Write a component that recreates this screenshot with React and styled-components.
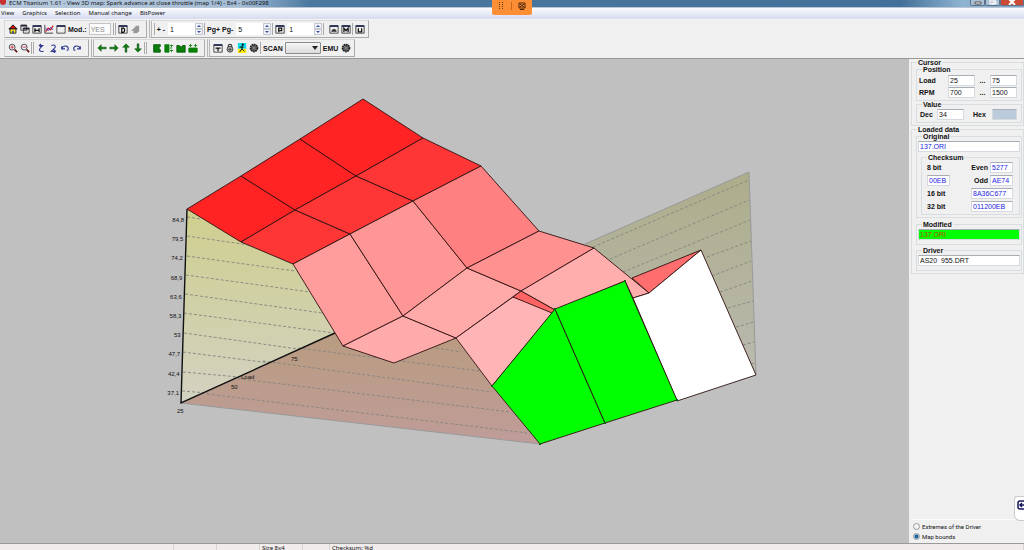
import React from "react";
import styled, { createGlobalStyle } from "styled-components";

const wallLines = [
  [187, 217, 201, 219],
  [187, 236, 249, 245],
  [187, 256, 295, 271],
  [186, 275, 310, 292],
  [185, 294, 322, 313],
  [184, 313, 334, 333],
  [184, 333, 298, 349],
  [183, 352, 270, 363],
  [183, 372, 239, 377],
  [182, 391, 208, 393],
  [298, 348, 480, 371],
  [436, 348, 461, 352],
  [263, 361, 492, 392],
  [233, 378, 510, 412],
  [207, 394, 527, 433],
  [593, 247, 749, 180],
  [610, 259, 749, 200],
  [623, 272, 750, 220],
  [707, 257, 751, 241],
  [712, 276, 751, 261],
  [720, 292, 752, 281],
  [728, 308, 753, 301],
  [736, 327, 754, 322],
  [743, 345, 754, 342],
  [751, 364, 755, 363],
];

const cells = [
  ["#ff2323", "187,209 241,176 295,210 241,242"],
  ["#ff2323", "241,176 300,139 356,176 295,210"],
  ["#ff2323", "300,139 363,99 423,138 356,176"],
  ["#ff3636", "241,242 295,210 350,234 293,264"],
  ["#ff3636", "295,210 356,176 413,201 350,234"],
  ["#ff3636", "356,176 423,138 481,166 413,201"],
  ["#ff9c9c", "293,264 350,234 403,316 343,346"],
  ["#ff9696", "350,234 413,201 467,268 403,316"],
  ["#ff8080", "413,201 481,166 539,231 467,268"],
  ["#ffabab", "343,346 403,316 456,338 394,363"],
  ["#ffa9a9", "403,316 467,268 521,291 456,338"],
  ["#ff9191", "467,268 539,231 594,248 521,291"],
  ["#ff6e6e", "632,278 701,250 649,293"],
  ["#ffadad", "521,291 594,248 649,293 633,298 625,281 555,310"],
  ["#ffb5b5", "456,338 513,297 555,310 492,386"],
  ["#ff6464", "513,297 521,291 555,310 552,313"],
  ["#ffffff", "633,298 649,293 701,250 756,375 677,401"],
  ["#00ff00", "492,386 555,309 605,423 540,444"],
  ["#00ff00", "555,309 625,281 677,400 605,423"],
];

const levels = [
  ["84,8", 220],
  ["79,5", 239],
  ["74,2", 258],
  ["68,9", 278],
  ["63,6", 297],
  ["58,3", 316],
  ["53", 335],
  ["47,7", 354],
  ["42,4", 374],
  ["37,1", 393],
];

const greenNodes = [
  [492, 386],
  [555, 309],
  [625, 281],
  [677, 400],
  [605, 423],
  [540, 444],
];

function Surface() {
  return (
    <Plot viewBox="0 59 909 484" preserveAspectRatio="xMidYMid meet" role="img" aria-label="Spark advance map">
      <defs>
        <linearGradient id="wall" x1="0" y1="0" x2="0" y2="1">
          <stop offset="0" stopColor="#cfcf8e" />
          <stop offset="1" stopColor="#d2d2c2" />
        </linearGradient>
        <linearGradient id="back" x1="0" y1="0" x2="0" y2="1">
          <stop offset="0" stopColor="#adad8a" />
          <stop offset="1" stopColor="#b9b9b0" />
        </linearGradient>
        <linearGradient id="floor" x1="0" y1="0" x2="0" y2="1">
          <stop offset="0" stopColor="#b99c80" />
          <stop offset="1" stopColor="#bf9c99" />
        </linearGradient>
      </defs>
      <polygon points="187,209 241,242 293,264 335,333 181,403" fill="url(#wall)" />
      <polygon points="181,403 335,333 343,346 394,363 456,338 492,386 540,444" fill="url(#floor)" />
      <polygon points="585,244 749,172 756,375 701,300 632,290" fill="url(#back)" />
      <path d="M181 403 540 444M585 244 749 172 756 375" fill="none" stroke="#999" />
      {wallLines.map(([x1, y1, x2, y2]) => (
        <line
          key={`${x1}-${y1}`}
          x1={x1}
          y1={y1}
          x2={x2}
          y2={y2}
          stroke="#858580"
          strokeWidth="0.9"
          strokeDasharray="3 2"
        />
      ))}
      <path d="M187 209 181 403 335 333" fill="none" stroke="#111" strokeWidth="1.4" />
      <g fontFamily="Liberation Sans, sans-serif" fontSize="6" fill="#111">
        {levels.map(([text, y]) => (
          <text key={text} x={184 - (y - 220) / 35} y={y + 2} textAnchor="end">
            {text}
          </text>
        ))}
        <text x="177" y="413">25</text>
        <text x="231" y="389">50</text>
        <text x="291" y="361">75</text>
        <text x="241" y="379">Load</text>
      </g>
      {cells.map(([fill, points]) => (
        <polygon key={points} points={points} fill={fill} stroke="#301010" strokeWidth="0.9" strokeLinejoin="round" />
      ))}
      {greenNodes.map(([x, y]) => (
        <rect key={x} x={x - 1} y={y - 1} width="2" height="2" fill="#086008" />
      ))}
    </Plot>
  );
}

const art = {
  home: (
    <>
      <path d="M1 6 6 1l5 5z" fill="#c41212" stroke="#111" />
      <path d="M2.500 6h7v5h-7z" fill="#ffee20" stroke="#111" />
      <path d="M5 8h2v3H5z" fill="#28409c" />
    </>
  ),
  copy: (
    <>
      <path d="M1 1.500h7v6H1zM4 5h7v6H4z" fill="#ddd" stroke="#333" />
      <path d="M1 2h7M4 5.500h7" stroke="#223" strokeWidth="2" />
    </>
  ),
  chart: (
    <>
      <path d="M1 1v10h10" fill="none" stroke="#223" />
      <path d="m2 9 3-4 3 2 3-5" fill="none" stroke="#e02020" strokeWidth="1.500" />
      <path d="m2 5 3 3 3-4 3 3" fill="none" stroke="#2424c0" />
    </>
  ),
  frame: (
    <>
      <path d="M1 2h10v9H1z" fill="#eee" stroke="#333" />
      <path d="M1 2.500h10" stroke="#222a50" strokeWidth="2" />
    </>
  ),
  hand: <path d="m1 8 5-4 1-2h4v7L8 11H4V8z" fill="#999" />,
  zoomIn: (
    <>
      <circle cx="5" cy="5" r="3.500" fill="#eef" stroke="#333" />
      <path d="m8 8 3 3" stroke="#611" strokeWidth="2" />
      <path d="M3 5h4M5 3v4" stroke="#d02020" />
    </>
  ),
  zoomOut: (
    <>
      <circle cx="5" cy="5" r="3.500" fill="#eef" stroke="#333" />
      <path d="m8 8 3 3" stroke="#611" strokeWidth="2" />
      <path d="M3 5h4" stroke="#d02020" />
    </>
  ),
  turnLeft: <path d="M4 3h4L5 6c-2 3 0 5 4 4M6 1 4 3l2 2" fill="none" stroke="#2c3890" strokeWidth="1.300" />,
  turnRight: <path d="M4 3c5-2 6 2 3 4l-3 3h5M7 8l2 2-2 2" fill="none" stroke="#2c3890" strokeWidth="1.300" />,
  undo: <path d="M2 4v3h4M2 7c2-5 8-4 8 0 0 2-1 2-2 2" fill="none" stroke="#2c3890" strokeWidth="1.300" />,
  redo: <path d="M10 4v3H6M10 7C8 2 2 3 2 7c0 2 1 2 2 2" fill="none" stroke="#2c3890" strokeWidth="1.300" />,
  left: <path d="m1 6 4-4v3h6v2H5v3z" fill="#0a800a" stroke="#053c05" strokeWidth="0.600" />,
  right: <path d="M11 6 7 2v3H1v2h6v3z" fill="#0a800a" stroke="#053c05" strokeWidth="0.600" />,
  up: <path d="m6 1 4 4H7v6H5V5H2z" fill="#0a800a" stroke="#053c05" strokeWidth="0.600" />,
  down: <path d="M6 11 2 7h3V1h2v6h3z" fill="#0a800a" stroke="#053c05" strokeWidth="0.600" />,
  fillLeft: <path d="M2 2h8v2L8 6l2 2v3H2z" fill="#0a800a" stroke="#075007" />,
  fillRight: <path d="M1 2h5v9H1zM7 3h4M7 6h3M7 9h4M9 2v3M9 8v3" fill="#0a800a" stroke="#0a800a" />,
  fillUp: <path d="M1 3h3l2 2 2-2h3v8H1z" fill="#0a800a" stroke="#075007" />,
  fillDown: <path d="M1 6h10v5H1zM3 1v4M9 1v4M1 3h4M7 3h4" fill="#0a800a" stroke="#0a800a" />,
  lock: (
    <>
      <path d="M4 5V3c0-2 4-2 4 0v2" fill="none" stroke="#444" strokeWidth="1.500" />
      <circle cx="6" cy="7.500" r="3.500" fill="#aaa" stroke="#333" />
      <path d="M6 6v3M4 8h4" stroke="#333" />
    </>
  ),
  runner: (
    <>
      <path d="M1 0h10v7H1z" fill="#10dcf0" />
      <path d="M1 7h10v5H1z" fill="#ffee10" />
      <circle cx="7" cy="2" r="1.300" fill="#111" />
      <path d="M3 5h5M6 3v4l3 3M6 7l-3 4" fill="none" stroke="#111" strokeWidth="1.200" />
    </>
  ),
  gear: (
    <>
      <circle cx="6" cy="6" r="4" fill="#888" stroke="#222" strokeWidth="2.500" strokeDasharray="2 0.600" />
      <circle cx="6" cy="6" r="1.500" fill="#eee" stroke="#222" />
    </>
  ),
};

const marks = {
  windowH: "M3.500 5v5M8.500 5v5M3.500 7.500h5",
  windowD: "M4.500 5v5h2c2-1 2-4 0-5z",
  windowP: "M4.500 10V5H8v3H5",
  windowE: "M3 8.500h2V7h2v1.500h2",
  windowM: "M3.500 10V5l2.500 3 2.500-3v5",
  windowU: "M4 5v4.500h4V5",
  windowT: "M3 6h6M6 6v4",
};

function Tool({ icon, label }) {
  return (
    <ToolButton type="button" aria-label={label}>
      <svg width="10" height="10" viewBox="0 0 12 12">
        {art[icon] || (
          <>
            <path d="M1 2h10v9H1z" fill="#eee" stroke="#333" />
            <path d="M1 2.500h10" stroke="#222a50" strokeWidth="2" />
            <path d={marks[icon]} fill="none" stroke="#111" strokeWidth="1.500" />
          </>
        )}
      </svg>
    </ToolButton>
  );
}

function Spin({ label, value }) {
  return (
    <SpinBox>
      <input aria-label={label} defaultValue={value} />
      <svg width="8" height="12" viewBox="0 0 8 12">
        <path d="M.5.500h7v5h-7zM.5 6.500h7v5h-7z" fill="#f1f3f8" stroke="#c3c7d2" />
        <path d="m2 4 2-2 2 2zM2 8l2 2 2-2z" fill="#3a50a0" />
      </svg>
    </SpinBox>
  );
}

function Field({ id, label, value, width, tone, fill }) {
  return (
    <>
      <label htmlFor={id}>{label}</label>
      <Box id={id} defaultValue={value} $width={width} $tone={tone} $fill={fill} />
    </>
  );
}

export default function App() {
  return (
    <Page>
      <GlobalStyle />
      <TitleBar>
        <AppIcon />
        <Title>ECM Titanium 1.61 - View 3D map: Spark advance at close throttle (map 1/4) - 8x4 - 0x00F298</Title>
        <WindowButtons>
          <WindowButton type="button" aria-label="Minimize">
            <svg width="8" height="5" viewBox="0 0 8 5"><path d="M1 2h6v2H1z" fill="#fff" stroke="#555" /></svg>
          </WindowButton>
          <WindowButton type="button" aria-label="Maximize">
            <svg width="8" height="5" viewBox="0 0 8 5"><path d="M1 0h4v4H1zM5 1h2v3H3" fill="#ccd" stroke="#fff" /></svg>
          </WindowButton>
          <WindowButton type="button" aria-label="Close" $close>
            <svg width="8" height="5" viewBox="0 0 8 5"><path d="m1-1 6 6M7-1 1 5" stroke="#fff" strokeWidth="2" /></svg>
          </WindowButton>
        </WindowButtons>
      </TitleBar>
      <Menu>
        <a href="#view">View</a>
        <a href="#graphics">Graphics</a>
        <a href="#selection">Selection</a>
        <a href="#manual">Manual change</a>
        <a href="#bitpower">BitPower</a>
      </Menu>
      <ShareTab>
        <svg width="6" height="8" viewBox="0 0 6 8">
          <path d="M1 .5h1M4 .5h1M1 2.500h1M4 2.500h1M1 4.500h1M4 4.500h1M1 6.500h1M4 6.500h1" stroke="#6b3a12" />
        </svg>
        <ShareLine />
        <svg width="8" height="8" viewBox="0 0 8 8" fill="none" stroke="#4a2408">
          <path d="M1 1h6v5H1zM2 7.500h4" />
          <path d="m2 2 4 3M6 2 2 5" />
        </svg>
      </ShareTab>
      <Toolbars>
        <ToolRow>
          <Group>
            <Tool icon="home" label="Home" />
            <Tool icon="copy" label="Copy" />
            <Tool icon="windowH" label="Hex view" />
            <Tool icon="chart" label="2D view" />
            <Tool icon="frame" label="3D view" />
            <ToolLabel htmlFor="mod">Mod.:</ToolLabel>
            <ModBox id="mod" defaultValue="YES" />
            <Rule />
            <Rule />
            <Tool icon="windowD" label="Data" />
            <Tool icon="hand" label="Pick" />
            <Spacer />
          </Group>
          <Group $grip>
            <Rule />
            <ToolText>+ -</ToolText>
            <Spin label="Step" value="1" />
            <Rule />
            <ToolText>Pg+ Pg-</ToolText>
            <Spin label="Page step" value="5" />
            <Rule />
            <Tool icon="windowP" label="Percent" />
            <Spin label="Percent step" value="1" />
            <Rule />
            <Spacer />
            <Tool icon="windowE" label="Equal" />
            <Tool icon="windowM" label="Mean" />
            <Rule />
            <Tool icon="windowU" label="Undo" />
          </Group>
        </ToolRow>
        <ToolRow>
          <Group>
            <Tool icon="zoomIn" label="Zoom in" />
            <Tool icon="zoomOut" label="Zoom out" />
            <Rule />
            <Rule />
            <Tool icon="turnLeft" label="Tilt up" />
            <Tool icon="turnRight" label="Tilt down" />
            <Tool icon="undo" label="Rotate left" />
            <Tool icon="redo" label="Rotate right" />
            <Spacer />
          </Group>
          <Group $grip>
            <Tool icon="left" label="Left" />
            <Tool icon="right" label="Right" />
            <Tool icon="up" label="Up" />
            <Tool icon="down" label="Down" />
            <Rule />
            <Rule />
            <Spacer />
            <Tool icon="fillLeft" label="Fill left" />
            <Tool icon="fillRight" label="Fill right" />
            <Tool icon="fillUp" label="Fill up" />
            <Tool icon="fillDown" label="Fill down" />
            <Spacer />
          </Group>
          <Group $grip>
            <Tool icon="windowT" label="Table" />
            <Tool icon="lock" label="Lock" />
            <Tool icon="runner" label="Run" />
            <Tool icon="gear" label="Settings" />
            <Rule />
            <ToolLabel htmlFor="scan">SCAN</ToolLabel>
            <ScanWrap>
              <select id="scan" defaultValue="">
                <option value="" />
              </select>
              <svg width="6" height="4" viewBox="0 0 6 4"><path d="M0 0h6L3 4z" fill="#222" /></svg>
            </ScanWrap>
            <ToolText>EMU</ToolText>
            <Tool icon="gear" label="Emulator" />
          </Group>
        </ToolRow>
      </Toolbars>
      <Workspace>
        <Surface />
        <Side>
          <Frame>
            <legend>Cursor</legend>
            <Frame $inner>
              <legend>Position</legend>
              <PositionGrid>
                <Field id="loadFrom" label="Load" value="25" width={27} />
                <Field id="loadTo" label="..." value="75" width={27} />
                <Field id="rpmFrom" label="RPM" value="700" width={27} />
                <Field id="rpmTo" label="..." value="1500" width={27} />
              </PositionGrid>
            </Frame>
            <Frame $inner>
              <legend>Value</legend>
              <ValueRow>
                <Field id="dec" label="Dec" value="34" width={27} />
                <Field id="hex" label="Hex" value="" width={25} fill="#bccbdb" />
              </ValueRow>
            </Frame>
          </Frame>
          <Frame>
            <legend>Loaded data</legend>
            <Frame $inner $after={3}>
              <legend>Original</legend>
              <FileBox aria-label="Original file" defaultValue="137.ORI" $tone="#2222e0" />
              <Frame $inner>
                <legend>Checksum</legend>
                <SumGrid>
                  <label htmlFor="sum8">8 bit</label>
                  <Field id="even" label="Even" value="5277" width={23} tone="#2222e0" />
                  <Box id="sum8" defaultValue="00EB" $width={23} $tone="#2222e0" />
                  <Field id="odd" label="Odd" value="AE74" width={23} tone="#2222e0" />
                </SumGrid>
                <WideSums>
                  <Field id="sum16" label="16 bit" value="8A36C677" width={42} tone="#2222e0" />
                  <Field id="sum32" label="32 bit" value="011200EB" width={42} tone="#2222e0" />
                </WideSums>
              </Frame>
            </Frame>
            <Frame $inner $after={2}>
              <legend>Modified</legend>
              <FileBox aria-label="Modified file" defaultValue="137.ORI" $tone="#b04a00" $fill="#00ff00" />
            </Frame>
            <Frame $inner>
              <legend>Driver</legend>
              <FileBox aria-label="Driver file" defaultValue="AS20_955.DRT" />
            </Frame>
          </Frame>
          <Bounds>
            <label>
              <input type="radio" name="bounds" />
              Extremes of the Driver
            </label>
            <label>
              <input type="radio" name="bounds" defaultChecked />
              Map bounds
            </label>
          </Bounds>
          <RemoteTab type="button" aria-label="Remote session">
            <svg width="8" height="10" viewBox="0 0 8 10">
              <path d="M8 1H3Q1 1 1 3v4q0 2 2 2h5M3 5h5M5 3 3 5l2 2" fill="none" stroke="#151560" strokeWidth="1.500" />
            </svg>
          </RemoteTab>
        </Side>
      </Workspace>
      <Status>
        <span />
        <span />
        <span />
        <span>Size 8x4</span>
        <span />
        <span>Checksum: %d</span>
      </Status>
    </Page>
  );
}

const GlobalStyle = createGlobalStyle`
  * {
    box-sizing: border-box;
  }
  body {
    margin: 0;
    background: #f0f0f0;
    color: #111;
    font-family: "Liberation Sans", sans-serif;
    font-size: 7px;
  }
  input, button, select {
    margin: 0;
    padding: 0;
    border: 0;
    font: inherit;
    color: inherit;
  }
`;

const Page = styled.div`
  position: relative;
  display: flex;
  flex-direction: column;
  height: 100vh;
  overflow: hidden;
`;

const TitleBar = styled.header`
  display: flex;
  align-items: flex-end;
  height: 8px;
  flex-shrink: 0;
  border-bottom: 1px solid #b8c6d6;
  background: linear-gradient(90deg, #b7cbdf 0, #a3bcd5 240px, #4a789f 310px, #447199 88%, #8fb4d2 94%, #7aa3c6 100%);
`;

const AppIcon = styled.span`
  width: 6px;
  height: 5px;
  margin-bottom: 2px;
  border-radius: 0 0 3px 3px;
  background: #c8322c;
`;

const Title = styled.span`
  margin-left: 3px;
  font-family: "Noto Sans", sans-serif;
  font-size: 6px;
  line-height: 8px;
  white-space: nowrap;
`;

const WindowButtons = styled.div`
  display: flex;
  align-self: flex-start;
  margin-left: auto;
`;

const WindowButton = styled.button`
  display: flex;
  justify-content: center;
  width: ${(props) => (props.$close ? "24px" : "15px")};
  height: 6px;
  border: 1px solid #5d738a;
  border-top: 0;
  border-radius: 0 0 2px 2px;
  background: ${(props) => (props.$close ? "#cc4b38" : "#a9bfd4")};
`;

const Menu = styled.nav`
  display: flex;
  align-items: center;
  gap: 8px;
  height: 12px;
  padding: 0 1px 1px;
  flex-shrink: 0;
  background: linear-gradient(#fafbfe, #d6dcef);
  border-bottom: 1px solid #f4f4f4;
  font-family: "Noto Sans", sans-serif;
  font-size: 6px;
  a {
    color: inherit;
    text-decoration: none;
  }
`;

const ShareTab = styled.div`
  position: absolute;
  top: 0;
  left: 50%;
  display: flex;
  align-items: center;
  justify-content: space-evenly;
  width: 40px;
  height: 15px;
  padding-bottom: 3px;
  transform: translateX(-50%);
  border-radius: 0 0 2px 2px;
  background: #fc8e35;
`;

const ShareLine = styled.span`
  width: 1px;
  height: 8px;
  background: #c46a20;
`;

const Toolbars = styled.div`
  display: flex;
  flex-direction: column;
  gap: 1px;
  padding-bottom: 1px;
  flex-shrink: 0;
  border-bottom: 1px solid #999;
`;

const ToolRow = styled.div`
  display: flex;
  gap: 2px;
  padding-left: 4px;
`;

const Group = styled.div`
  display: flex;
  align-items: center;
  height: 18px;
  padding: 0 2px;
  border: 1px solid #d9d9d9;
  border-right-color: #aaa;
  border-bottom-color: #aaa;
  border-left: ${(props) => (props.$grip ? "3px double #b5b5b5" : "1px solid #d9d9d9")};
`;

const ToolButton = styled.button`
  display: flex;
  align-items: center;
  justify-content: center;
  width: 12px;
  height: 14px;
  background: none;
`;

const ToolText = styled.span`
  padding: 0 2px 0 1px;
  font-size: 7px;
  font-weight: 700;
  white-space: nowrap;
`;

const ToolLabel = styled(ToolText).attrs({ as: "label" })``;

const Rule = styled.span`
  width: 1px;
  height: 12px;
  margin-right: 1px;
  background: #aaa;
`;

const Spacer = styled.span`
  width: 3px;
`;

const ModBox = styled.input`
  width: 22px;
  height: 12px;
  margin-right: 2px;
  padding: 0 1px;
  border: 1px solid #c4c4c4;
  background: #fbfbfb;
  color: #888;
`;

const SpinBox = styled.div`
  display: flex;
  align-items: center;
  padding: 0 1px;
  input {
    width: 27px;
    height: 12px;
    padding: 0 2px;
    background: #fff;
  }
`;

const ScanWrap = styled.div`
  position: relative;
  display: flex;
  margin-right: 1px;
  select {
    width: 36px;
    height: 12px;
    appearance: none;
    border: 1px solid #8b8b8b;
    border-radius: 1px;
    background: linear-gradient(#f5f5f5, #dcdcdc);
  }
  svg {
    position: absolute;
    top: 4px;
    right: 3px;
    pointer-events: none;
  }
`;

const Workspace = styled.main`
  display: flex;
  flex: 1;
  min-height: 0;
`;

const Plot = styled.svg`
  flex: 1;
  min-width: 0;
  height: 100%;
  background: #c0c0c0;
`;

const Side = styled.aside`
  position: relative;
  display: flex;
  flex-direction: column;
  width: 115px;
  flex-shrink: 0;
  padding-left: 2px;
  label,
  legend {
    font-weight: 700;
    line-height: 7px;
  }
`;

const Frame = styled.fieldset`
  min-width: 0;
  margin: 0 0 ${(props) => props.$after || 0}px ${(props) => (props.$inner ? "3px" : "0")};
  padding: 0 1px 2px;
  border: 1px solid #d8dde0;
  legend {
    margin-left: 4px;
    padding: 0 1px;
  }
`;

const Box = styled.input`
  width: ${(props) => props.$width}px;
  height: 11px;
  padding: 0 1px;
  border: 1px solid #d5dae0;
  border-top-color: #a8adb5;
  background: ${(props) => props.$fill || "#fff"};
  color: ${(props) => props.$tone || "#111"};
  font-size: 7px;
  line-height: 9px;
`;

const FileBox = styled(Box)`
  display: block;
  width: 100%;
  margin: 1px 0 2px;
`;

const PositionGrid = styled.div`
  display: grid;
  grid-template-columns: 29px 27px 15px 27px;
  row-gap: 1px;
  align-items: center;
  padding: 2px 0 0 1px;
  label:nth-of-type(even) {
    text-align: center;
  }
`;

const ValueRow = styled.div`
  display: grid;
  grid-template-columns: 17px 27px 28px 25px;
  align-items: center;
  padding: 1px 0 0 2px;
  label:nth-of-type(even) {
    padding-left: 9px;
  }
`;

const SumGrid = styled.div`
  display: grid;
  grid-template-columns: 23px 40px 23px;
  row-gap: 2px;
  align-items: center;
  padding: 1px 0 0 4px;
  label:not([for="sum8"]) {
    padding-right: 2px;
    text-align: right;
  }
`;

const WideSums = styled.div`
  display: grid;
  grid-template-columns: 44px 42px;
  row-gap: 2px;
  align-items: center;
  padding: 2px 0 0 4px;
`;

const Bounds = styled.div`
  display: flex;
  flex-direction: column;
  gap: 3px;
  margin-top: auto;
  padding: 3px 2px;
  border-top: 1px solid #fafafa;
  label {
    display: flex;
    align-items: center;
    gap: 2px;
    font-family: Roboto, sans-serif;
    font-size: 6px;
    font-weight: 400;
  }
  input {
    width: 7px;
    height: 7px;
    appearance: none;
    border: 1px solid #999;
    border-radius: 50%;
    background: #f4f4f4;
  }
  input:checked {
    background: radial-gradient(#1c5f96 40%, #9cc4de 60%);
  }
`;

const RemoteTab = styled.button`
  position: absolute;
  right: 0;
  bottom: 22px;
  width: 10px;
  height: 25px;
  padding: 0 0 6px 2px;
  background: #fff;
  border: 1px solid #ccc;
  border-right: 0;
  border-radius: 3px 0 0 6px;
`;

const Status = styled.footer`
  display: grid;
  grid-template-columns: 174px 43px 43px 43px 27px 1fr;
  height: 7px;
  flex-shrink: 0;
  border-top: 1px solid #999;
  background: #f0ecec;
  font-family: "Noto Sans", sans-serif;
  font-size: 6px;
  line-height: 8px;
  white-space: nowrap;
  span {
    padding-left: 2px;
    border-right: 1px solid #d8d4d4;
  }
`;
